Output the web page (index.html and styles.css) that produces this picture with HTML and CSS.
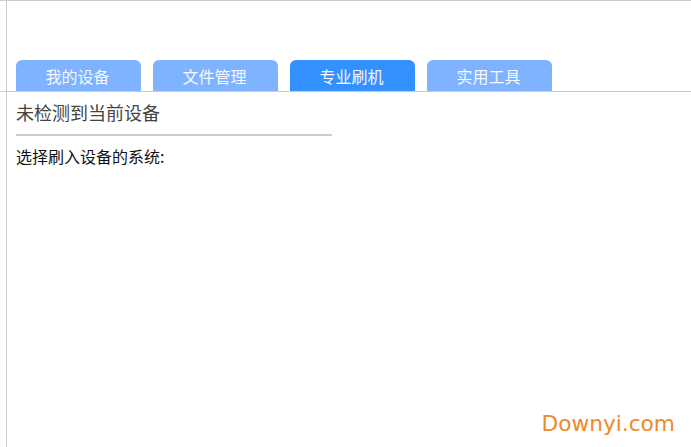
FILE: index.html
```html
<!DOCTYPE html>
<html lang="zh-CN">
<head>
  <meta charset="UTF-8" />
  <meta name="viewport" content="width=device-width, initial-scale=1.0" />
  <title>专业刷机</title>
  <link rel="stylesheet" href="styles.css">
</head>
<body>
  <div class="left-line"></div>

  <nav class="tabs">
    <button class="tab">我的设备</button>
    <button class="tab">文件管理</button>
    <button class="tab active">专业刷机</button>
    <button class="tab">实用工具</button>
  </nav>

  <div class="container">
    <div class="device-status">未检测到当前设备</div>
    <div class="system-label">选择刷入设备的系统:</div>
  </div>

  <div class="watermark">Downyi.com</div>
</body>
</html>
```

FILE: styles.css
```css
* {
  box-sizing: border-box;
  margin: 0;
  padding: 0;
  font-family: "Noto Sans CJK SC", "Liberation Sans", sans-serif;
}
html, body {
  height: 100%;
  overflow: hidden;
}
body {
  position: relative;
  background-color: white;
  color: #333;
  border-top: 1px solid #ccc;
}
.left-line {
  position: absolute;
  top: 0;
  bottom: 0;
  left: 6px;
  width: 1px;
  background-color: #ccc;
}
.tabs {
  display: flex;
  gap: 12px;
  height: 91px;
  padding: 59px 0 0 16px;
  border-bottom: 1px solid #ccc;
}
.tab {
  width: 125px;
  height: 31px;
  padding: 2px 2px 0 0;
  background-color: #7fb3ff;
  color: #f4f8ff;
  border: none;
  border-radius: 6px 6px 0 0;
  font-size: 16px;
  line-height: 29px;
}
.tab.active {
  background-color: #3390ff;
}
.container {
  padding-left: 16px;
}
.device-status {
  width: 316px;
  height: 44px;
  border-bottom: 2px solid #ccc;
  color: #444;
  font-size: 18px;
  line-height: 41px;
}
.system-label {
  margin-top: 8px;
  color: #111;
  font-size: 16px;
  line-height: 24px;
}
.watermark {
  position: absolute;
  right: 16px;
  bottom: 11px;
  color: #ee8a2c;
  font-family: "DejaVu Sans", sans-serif;
  font-size: 21.7px;
}
```
